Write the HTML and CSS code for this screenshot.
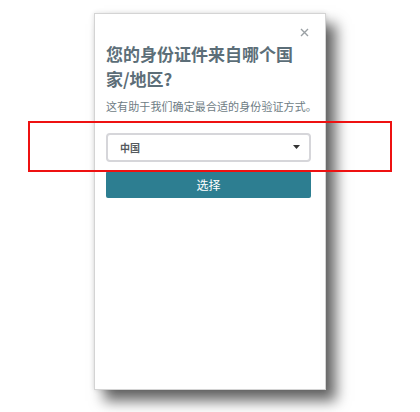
FILE: index.html
```html
<!DOCTYPE html>
<html lang="zh">
<head>
<meta charset="utf-8">
<link rel="stylesheet" href="styles.css">
</head>
<body>
<div class="stage">
  <div class="panel">
    <div class="close-row">
      <svg class="close" width="9" height="9" viewBox="0 0 9 9"><path d="M1 1L8 8M8 1L1 8" stroke="#9aa0a4" stroke-width="1.4" fill="none"/></svg>
    </div>
    <h1 class="title">您的身份证件来自哪个国家/地区?</h1>
    <p class="sub">这有助于我们确定最合适的身份验证方式。</p>
    <div class="select">
      <span class="select-text">中国</span>
      <svg class="caret" width="7" height="4" viewBox="0 0 7 4"><path d="M0 0H7L3.5 4Z" fill="#333"/></svg>
    </div>
    <button class="btn">选择</button>
  </div>
  <div class="highlight"></div>
</div>
</body>
</html>
```
FILE: styles.css
```css
html, body {
  margin: 0;
  padding: 0;
  background: #ffffff;
}
body {
  font-family: "Noto Sans CJK SC", "Noto Sans", sans-serif;
  width: 420px;
  height: 412px;
  overflow: hidden;
}
.stage {
  position: relative;
  width: 420px;
  height: 412px;
  padding: 13px 0 0 94px;
  box-sizing: border-box;
}
.panel {
  width: 232px;
  height: 377px;
  box-sizing: border-box;
  background: #ffffff;
  border: 1px solid #d4d4d4;
  padding: 0 14px 0 11px;
  box-shadow: 0 0 5px rgba(0,0,0,0.12), 10px 11px 13px rgba(0,0,0,0.6);
}
.close-row {
  display: flex;
  justify-content: flex-end;
  height: 12px;
  padding-top: 14px;
  padding-right: 2px;
}
.close {
  display: block;
}
.title {
  margin: 1px 0 0 0;
  font-size: 17px;
  line-height: 25px;
  font-weight: 700;
  color: #5c6e78;
  letter-spacing: 0;
}
.sub {
  margin: 7px 0 0 0;
  font-size: 11px;
  line-height: 16px;
  color: #6e7c84;
  white-space: nowrap;
  letter-spacing: 0.1px;
}
.select {
  margin-top: 19px;
  height: 29px;
  box-sizing: border-box;
  border: 2px solid #d6d6da;
  border-radius: 4px;
  display: flex;
  align-items: center;
  justify-content: space-between;
  padding: 0 9px 0 12px;
  width: 205px;
}
.select-text {
  font-size: 10px;
  font-weight: 700;
  color: #555a5e;
}
.caret {
  display: block;
  margin-top: -2px;
}
.btn {
  margin-top: 9px;
  display: block;
  width: 205px;
  height: 27px;
  border: none;
  border-radius: 2px;
  background: #2d7e91;
  color: #ffffff;
  font-family: "Noto Sans CJK SC", "Noto Sans", sans-serif;
  font-size: 12px;
  padding: 0;
}
.highlight {
  position: absolute;
  left: 28px;
  top: 121px;
  width: 364px;
  height: 51px;
  box-sizing: border-box;
  border: 2px solid #ee1111;
}
```
